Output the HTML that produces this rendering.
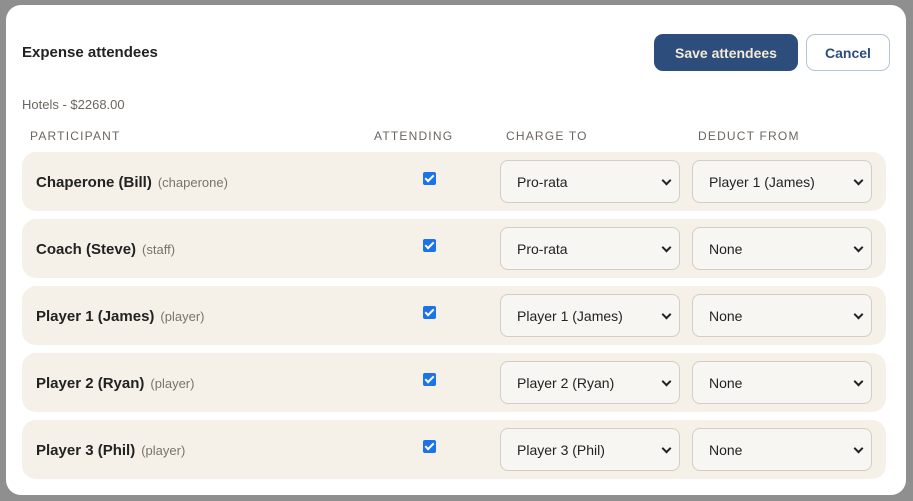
<!DOCTYPE html>
<html><head><style>
*{box-sizing:border-box;margin:0;padding:0}
body{width:913px;height:501px;background:#8f8f8f;font-family:"Liberation Sans",sans-serif;position:relative;overflow:hidden}
.m{position:absolute;left:6px;top:5px;width:900px;height:490px;background:#fff;border-radius:15px}
h1{position:absolute;left:16px;top:39px;font-size:15px;font-weight:bold;color:#222}
.save{position:absolute;left:648px;top:29px;width:144px;height:37px;background:#2d4e7c;color:#f3ead7;border-radius:9px;font-weight:bold;font-size:14px;text-align:center;line-height:38px}
.cancel{position:absolute;left:800px;top:29px;width:84px;height:37px;border:1px solid #b7c3d6;color:#2d4e7c;border-radius:9px;font-weight:bold;font-size:14px;text-align:center;line-height:36px}
.sub{position:absolute;left:16px;top:92px;font-size:13px;color:#6b6560}
.th{position:absolute;top:124px;font-size:12px;letter-spacing:1.2px;color:#6b6560}
.row{position:absolute;left:16px;width:864px;height:59px;background:#f5f0e8;border-radius:14px}
.nm{position:absolute;left:14px;top:22px;font-size:15px;font-weight:bold;color:#222}
.nm span{font-weight:normal;font-size:13px;color:#7a736c;margin-left:6px}
.cb{position:absolute;left:401px;top:20px;width:13px;height:13px;background:#1a73e8;border-radius:2px}
.cb:after{content:"";position:absolute;left:4px;top:1px;width:3px;height:7px;border:solid #fff;border-width:0 2px 2px 0;transform:rotate(45deg)}
.sel{position:absolute;top:8px;width:180px;height:43px;border:1px solid #d3cdc6;border-radius:8px;background:#f8f6f2;font-size:14px;color:#222;padding-left:16px;line-height:43px}
.sel:after{content:"";position:absolute;right:9px;top:16px;width:5px;height:5px;border:solid #222;border-width:0 2.5px 2.5px 0;transform:rotate(45deg)}
</style></head><body>
<div class="m">
<h1>Expense attendees</h1>
<div class="save">Save attendees</div>
<div class="cancel">Cancel</div>
<div class="sub">Hotels - $2268.00</div>
<div class="th" style="left:24px">PARTICIPANT</div>
<div class="th" style="left:368px">ATTENDING</div>
<div class="th" style="left:500px">CHARGE TO</div>
<div class="th" style="left:692px">DEDUCT FROM</div>
<div class="row" style="top:147px"><div class="nm">Chaperone (Bill)<span>(chaperone)</span></div><div class="cb"></div><div class="sel" style="left:478px">Pro-rata</div><div class="sel" style="left:670px">Player 1 (James)</div></div>
<div class="row" style="top:214px"><div class="nm">Coach (Steve)<span>(staff)</span></div><div class="cb"></div><div class="sel" style="left:478px">Pro-rata</div><div class="sel" style="left:670px">None</div></div>
<div class="row" style="top:281px"><div class="nm">Player 1 (James)<span>(player)</span></div><div class="cb"></div><div class="sel" style="left:478px">Player 1 (James)</div><div class="sel" style="left:670px">None</div></div>
<div class="row" style="top:348px"><div class="nm">Player 2 (Ryan)<span>(player)</span></div><div class="cb"></div><div class="sel" style="left:478px">Player 2 (Ryan)</div><div class="sel" style="left:670px">None</div></div>
<div class="row" style="top:415px"><div class="nm">Player 3 (Phil)<span>(player)</span></div><div class="cb"></div><div class="sel" style="left:478px">Player 3 (Phil)</div><div class="sel" style="left:670px">None</div></div>
</div>
</body></html>
